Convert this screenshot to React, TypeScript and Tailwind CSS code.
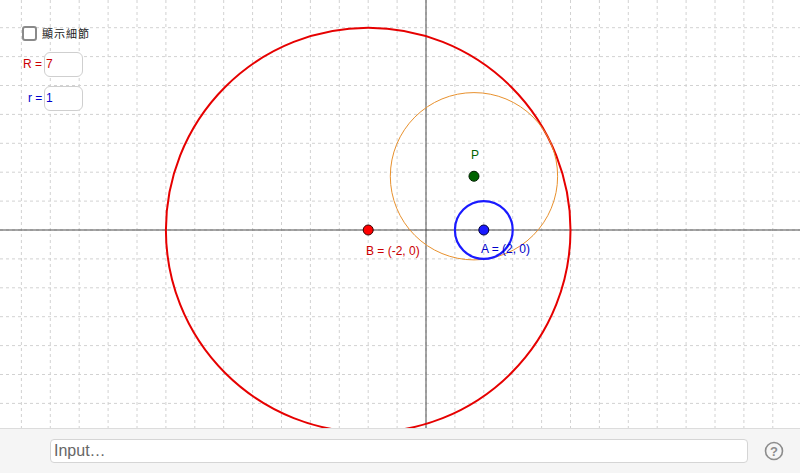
import React from "react";

const ORIGIN_X = 426;
const ORIGIN_Y = 230;
const UNIT = 28.9;

const px = (x: number) => ORIGIN_X + x * UNIT;
const py = (y: number) => ORIGIN_Y - y * UNIT;

function GraphicsView() {
	const cols: number[] = [];
	for (let k = -15; k <= 13; k++) cols.push(px(k));
	const rows: number[] = [];
	for (let k = -7; k <= 8; k++) rows.push(py(k));

	// P lies on the ellipse PA + PB = R - r
	const P = { x: 1.66, y: 1.86 };
	const pb = Math.hypot(P.x + 2, P.y);
	const rho = 7 - pb;

	return (
		<svg width="800" height="428" className="block" style={{ fontFamily: '"Liberation Sans", Arial, sans-serif' }}>
			<rect x="0" y="0" width="800" height="428" fill="#ffffff" />
			{cols.map((x) => (
				<line key={"c" + x} x1={x} y1={0} x2={x} y2={428} stroke="#d2d2d2" strokeWidth="1" strokeDasharray="3 3" />
			))}
			{rows.map((y) => (
				<line key={"r" + y} x1={0} y1={y} x2={800} y2={y} stroke="#d2d2d2" strokeWidth="1" strokeDasharray="3 3" />
			))}
			<line x1={ORIGIN_X} y1={0} x2={ORIGIN_X} y2={428} stroke="#4d4d4d" strokeWidth="1" />
			<line x1={0} y1={ORIGIN_Y} x2={800} y2={ORIGIN_Y} stroke="#4d4d4d" strokeWidth="1" />

			<circle cx={px(-2)} cy={py(0)} r={7 * UNIT} fill="none" stroke="#e60000" strokeWidth="2" />
			<circle cx={px(P.x)} cy={py(P.y)} r={rho * UNIT} fill="none" stroke="#e8912e" strokeWidth="1" />
			<circle cx={px(2)} cy={py(0)} r={UNIT} fill="none" stroke="#1a1aff" strokeWidth="2.2" />

			<circle cx={px(-2)} cy={py(0)} r="5" fill="#ff0000" stroke="#3a0000" strokeWidth="1" />
			<circle cx={px(2)} cy={py(0)} r="5" fill="#1a1aff" stroke="#00003a" strokeWidth="1" />
			<circle cx={px(P.x)} cy={py(P.y)} r="5" fill="#006400" stroke="#002000" strokeWidth="1" />

			<text x="471" y="159" fontSize="12" fill="#006400">P</text>
			<text x="366" y="255" fontSize="12" fill="#cc0000">B = (-2, 0)</text>
			<text x="481" y="253" fontSize="12" fill="#0000cc">A = (2, 0)</text>
		</svg>
	);
}

function Controls() {
	return (
		<div className="absolute left-0 top-0 flex flex-col pl-[22px] pt-[25px]" style={{ fontFamily: '"Liberation Sans", Arial, sans-serif' }}>
			<label className="flex items-center gap-[5px]">
				<span className="w-[15px] h-[15px] rounded-[3px] border-2 border-[#8a8a8a] bg-white" />
				<span className="text-[11px] tracking-[1px] text-[#222]" style={{ fontFamily: '"Noto Sans CJK TC", "Noto Sans CJK SC", sans-serif' }}>
					顯示細節
				</span>
			</label>
			<div className="flex items-center mt-[10px] ml-[1px]">
				<span className="text-[12px] text-[#cc0000] w-[21px]">R =</span>
				<div className="w-[39px] h-[25px] rounded-md border border-[#cfcfcf] bg-white flex items-center pl-[1px] text-[12px] text-[#cc0000]">7</div>
			</div>
			<div className="flex items-center mt-[9px] ml-[1px]">
				<span className="text-[12px] text-[#0000cc] w-[21px] pl-[5px]">r =</span>
				<div className="w-[39px] h-[25px] rounded-md border border-[#cfcfcf] bg-white flex items-center pl-[1px] text-[12px] text-[#0000cc]">1</div>
			</div>
		</div>
	);
}

function InputBar() {
	return (
		<div className="flex-1 flex items-center border-t border-[#dcdcdc] bg-[#f5f5f5] pl-[50px] pr-[16px]">
			<div className="w-[698px] h-[24px] rounded-[4px] border border-[#d5d5d5] bg-white flex items-center pl-[3px]">
				<span className="text-[16px] text-[#666666]" style={{ fontFamily: '"Liberation Sans Narrow", "Liberation Sans", Arial, sans-serif' }}>
					Input…
				</span>
			</div>
			<div className="ml-auto">
				<svg width="20" height="20" viewBox="0 0 20 20" className="block">
					<circle cx="10" cy="10" r="8.5" fill="none" stroke="#8c8c8c" strokeWidth="1.6" />
					<text x="10" y="14.5" textAnchor="middle" fontSize="13" fontWeight="bold" fill="#8c8c8c" style={{ fontFamily: '"Liberation Sans", Arial, sans-serif' }}>
						?
					</text>
				</svg>
			</div>
		</div>
	);
}

export default function App() {
	return (
		<div className="w-[800px] h-[473px] flex flex-col overflow-hidden bg-white">
			<div className="relative h-[428px] shrink-0">
				<GraphicsView />
				<Controls />
			</div>
			<InputBar />
		</div>
	);
}
